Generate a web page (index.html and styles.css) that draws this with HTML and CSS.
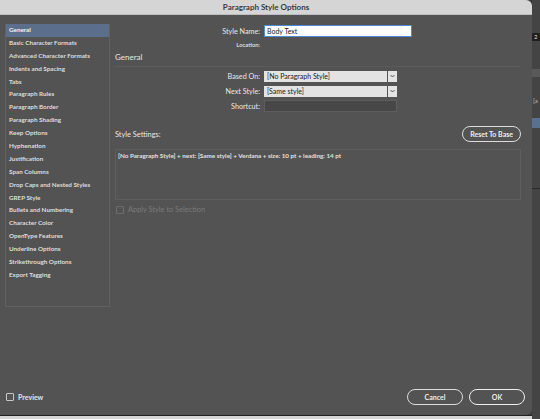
FILE: index.html
```html
<!DOCTYPE html>
<html lang="en">
  <head>
    <meta charset="UTF-8" />
    <meta name="viewport" content="width=device-width, initial-scale=1.0" />
    <title>Paragraph Style Options</title>
    <link rel="stylesheet" href="styles.css">
  </head>
  <body>
    <div class="screen">
      <div class="stack">
        <div class="dialog">
          <div class="titlebar">Paragraph Style Options</div>

          <div class="content">
            <ul class="sidebar">
              <li class="selected">General</li>
              <li>Basic Character Formats</li>
              <li>Advanced Character Formats</li>
              <li>Indents and Spacing</li>
              <li>Tabs</li>
              <li>Paragraph Rules</li>
              <li>Paragraph Border</li>
              <li>Paragraph Shading</li>
              <li>Keep Options</li>
              <li>Hyphenation</li>
              <li>Justification</li>
              <li>Span Columns</li>
              <li>Drop Caps and Nested Styles</li>
              <li>GREP Style</li>
              <li>Bullets and Numbering</li>
              <li>Character Color</li>
              <li>OpenType Features</li>
              <li>Underline Options</li>
              <li>Strikethrough Options</li>
              <li>Export Tagging</li>
            </ul>

            <div class="main">
              <div class="row">
                <label class="label">Style Name:</label>
                <div class="text-input">Body Text</div>
              </div>
              <div class="row row-small">
                <label class="label label-small">Location:</label>
              </div>

              <h2 class="section">General</h2>
              <div class="rule"></div>

              <div class="row">
                <label class="label">Based On:</label>
                <div class="select">
                  <span class="select-value">[No Paragraph Style]</span>
                  <span class="select-arrow">
                    <svg width="5" height="4" viewBox="0 0 5 4"><polyline points="0.5,1 2.5,3 4.5,1" fill="none" stroke="#444" stroke-width="0.9"/></svg>
                  </span>
                </div>
              </div>
              <div class="row">
                <label class="label">Next Style:</label>
                <div class="select">
                  <span class="select-value">[Same style]</span>
                  <span class="select-arrow">
                    <svg width="5" height="4" viewBox="0 0 5 4"><polyline points="0.5,1 2.5,3 4.5,1" fill="none" stroke="#444" stroke-width="0.9"/></svg>
                  </span>
                </div>
              </div>
              <div class="row">
                <label class="label">Shortcut:</label>
                <div class="shortcut"></div>
              </div>

              <div class="settings-head">
                <span class="settings-title">Style Settings:</span>
                <button class="pill">Reset To Base</button>
              </div>
              <div class="settings-box">[No Paragraph Style] + next: [Same style] + Verdana + size: 10 pt + leading: 14 pt</div>

              <div class="check check-disabled">
                <span class="box"></span>
                <span>Apply Style to Selection</span>
              </div>
            </div>
          </div>

          <div class="footer">
            <div class="check">
              <span class="box"></span>
              <span>Preview</span>
            </div>
            <div class="buttons">
              <button class="pill pill-wide">Cancel</button>
              <button class="pill pill-wide pill-default">OK</button>
            </div>
          </div>
        </div>
        <div class="under"></div>
      </div>

      <div class="backdrop">
        <div class="bd-dark">2</div>
        <div class="bd-mid"></div>
        <div class="bd-text">[a</div>
        <div class="bd-blue"></div>
        <div class="bd-line"></div>
      </div>
    </div>
  </body>
</html>
```

FILE: styles.css
```css
body {
  margin: 0;
  font-family: Lato, "Open Sans", sans-serif;
  background: #3a3a3a;
}

.screen {
  display: flex;
  width: 540px;
  height: 419px;
  overflow: hidden;
}

.stack {
  display: flex;
  flex-direction: column;
  width: 532px;
}

.dialog {
  height: 415px;
  background: #535353;
  border-radius: 0 6px 6px 0;
  display: flex;
  flex-direction: column;
  color: #e4e4e4;
  overflow: hidden;
}

.under {
  flex: 1;
  background: #d6d6d6;
  border-top: 1px solid #222;
}

.titlebar {
  height: 15px;
  line-height: 15px;
  background: #d5d5d5;
  color: #3b3b3b;
  font-size: 8px;
  font-weight: 700;
  text-align: center;
  border-bottom: 1px solid #bdbdbd;
  box-sizing: border-box;
}

.content {
  flex: 1;
  display: flex;
  align-items: flex-start;
  padding: 9px 0 0 5px;
}

/* left category list */
.sidebar {
  list-style: none;
  margin: 0;
  padding: 0;
  width: 105px;
  height: 283px;
  box-sizing: border-box;
  border: 1px solid #616161;
  border-top: none;
}

.sidebar li {
  height: 12.9px;
  line-height: 12.9px;
  padding-left: 3px;
  font-size: 6.3px;
  font-weight: 700;
  color: #dedede;
  white-space: nowrap;
}

.sidebar li.selected {
  background: #5b6f8c;
  color: #f4f4f4;
}

/* right side form */
.main {
  width: 406px;
  margin-left: 5px;
  padding-top: 1px;
}

.row {
  display: grid;
  grid-template-columns: 145px 1fr;
  column-gap: 4px;
  align-items: center;
  height: 12px;
  margin-bottom: 3px;
}

.row-small {
  height: 8px;
}

.label {
  text-align: right;
  font-size: 7.2px;
  color: #e8e8e8;
}

.label-small {
  font-size: 5.8px;
  font-weight: 700;
  color: #dcdcdc;
}

.text-input {
  width: 148px;
  height: 12px;
  box-sizing: border-box;
  background: #fff;
  border: 1px solid #4e8ad6;
  color: #222;
  font-size: 7px;
  line-height: 10px;
  padding-left: 2px;
}

.section {
  margin: 4px 0 0;
  font-size: 8px;
  font-weight: 400;
  color: #e6e6e6;
  height: 10px;
  line-height: 10px;
}

.rule {
  height: 1px;
  background: #5c5c5c;
  margin: 4px 0 3px;
}

.select {
  display: flex;
  gap: 1px;
  width: 133px;
  height: 11px;
}

.select-value {
  flex: 1;
  background: #e3e3e3;
  color: #222;
  font-size: 7px;
  line-height: 11px;
  padding-left: 3px;
}

.select-arrow {
  width: 9px;
  background: #e3e3e3;
  display: flex;
  align-items: center;
  justify-content: center;
}

.shortcut {
  width: 133px;
  height: 12px;
  box-sizing: border-box;
  background: #474747;
  border: 1px solid #5e5e5e;
}

.settings-head {
  display: flex;
  justify-content: space-between;
  align-items: center;
  margin-top: 14px;
  height: 16px;
}

.settings-title {
  font-size: 7.4px;
  color: #e6e6e6;
}

.pill {
  font-family: Lato, "Open Sans", sans-serif;
  background: transparent;
  color: #ececec;
  border: 1px solid #dcdcdc;
  border-radius: 9px;
  height: 16px;
  padding: 0 7px;
  font-size: 7px;
  font-weight: 700;
  cursor: pointer;
}

.settings-box {
  margin-top: 7px;
  height: 51px;
  box-sizing: border-box;
  border: 1px solid #5e5e5e;
  padding: 2px 2px;
  font-size: 6.3px;
  font-weight: 700;
  color: #e0e0e0;
  white-space: nowrap;
}

.check {
  display: flex;
  align-items: center;
  gap: 4px;
  font-size: 7px;
  font-weight: 700;
  color: #e4e4e4;
}

.check .box {
  width: 6px;
  height: 6px;
  border: 1px solid #c8c8c8;
  border-radius: 1px;
}

.check-disabled {
  margin-top: 5px;
  margin-left: 1px;
  font-size: 7.4px;
  font-weight: 400;
  color: #7a7a7a;
}

.check-disabled .box {
  border-color: #6c6c6c;
}

.footer {
  height: 30px;
  display: flex;
  justify-content: space-between;
  align-items: center;
  padding: 0 7px 6px 6px;
  box-sizing: border-box;
}

.buttons {
  display: flex;
  gap: 6px;
}

.pill-wide {
  width: 56px;
  height: 16px;
}

.pill-default {
  border: 1.5px solid #efefef;
}

/* strip of the app window behind the dialog */
.backdrop {
  width: 8px;
  background: #444;
  display: flex;
  flex-direction: column;
}

.bd-dark {
  margin-top: 33px;
  height: 8px;
  background: #1f1f1f;
  color: #ddd;
  font-size: 6px;
  line-height: 8px;
  padding-left: 2px;
}

.bd-mid {
  margin-top: 28px;
  height: 8px;
  background: #595959;
}

.bd-text {
  margin-top: 20px;
  font-size: 6px;
  color: #bbb;
  padding-left: 1px;
}

.bd-blue {
  margin-top: 14px;
  height: 10px;
  background: #5a7090;
}

.bd-line {
  margin-top: 60px;
  height: 1px;
  background: #2a2a2a;
}
```
